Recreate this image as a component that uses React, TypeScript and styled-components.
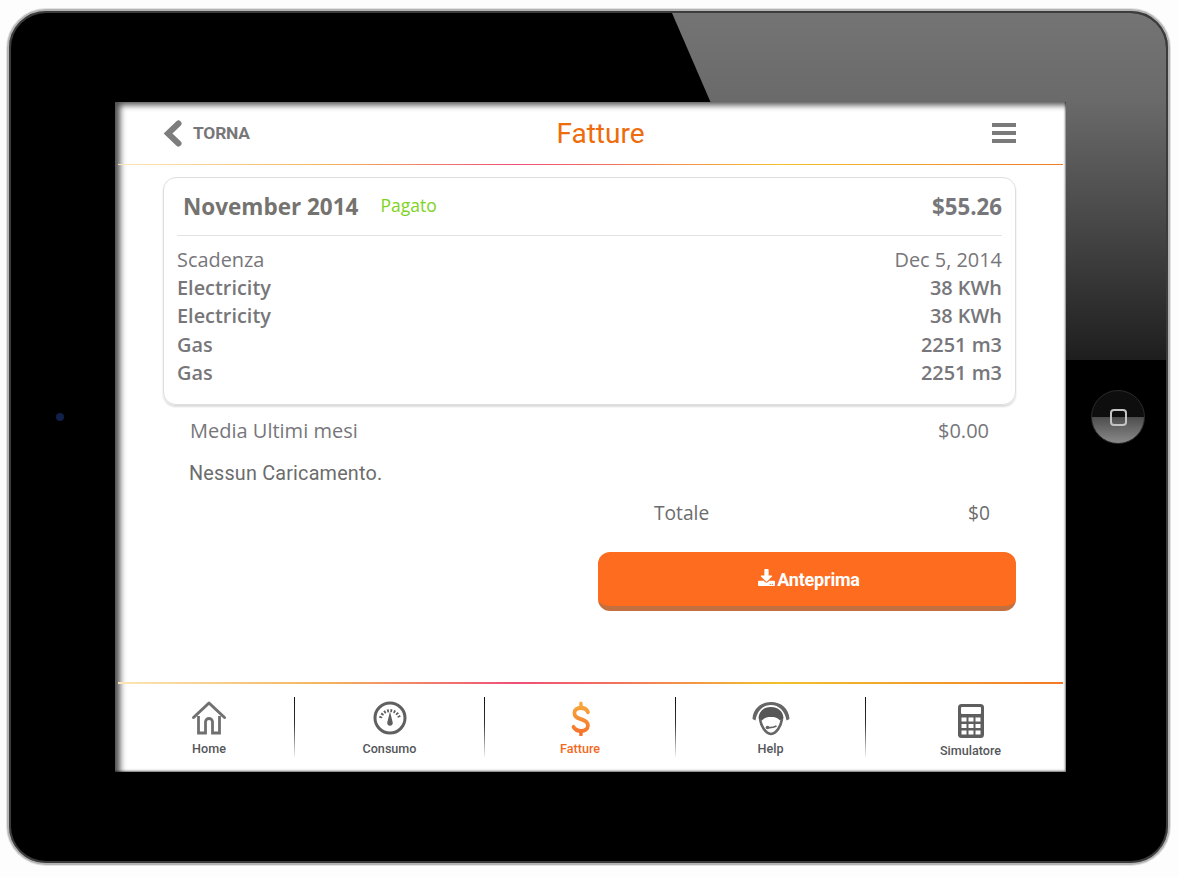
import styled, { createGlobalStyle } from "styled-components";
import { FaDownload } from "react-icons/fa";

const GlobalStyle = createGlobalStyle`
  html, body {
    margin: 0;
    padding: 0;
    background: #fdfdfd;
  }
  * {
    box-sizing: border-box;
  }
`;

const Page = styled.div`
  width: 1179px;
  height: 877px;
  padding: 9px 9px 12px 7px;
  overflow: hidden;
`;

const Tablet = styled.div`
  position: relative;
  width: 1163px;
  height: 856px;
  padding: 91px 101px 90px 106px;
  background: #000;
  border: 2px solid #b4b4b4;
  border-radius: 39px;
  box-shadow: inset 0 0 0 2px #3c3c3c, 0 0 0 1px #e2e2e2;
  overflow: hidden;
`;

const Glare = styled.div`
  position: absolute;
  top: 2px;
  right: 2px;
  width: 494px;
  height: 347px;
  border-radius: 0 35px 0 0;
  background: linear-gradient(#747474, #6a6a6a 25%, #484848 60%, #1e1e1e);
  clip-path: polygon(0 0, 100% 0, 100% 100%, 150px 100%);
`;

const Camera = styled.div`
  position: absolute;
  left: 47px;
  top: 402px;
  width: 8px;
  height: 8px;
  border-radius: 50%;
  background: #10204a;
`;

const HomeButton = styled.div`
  position: absolute;
  left: 1082px;
  top: 379px;
  width: 54px;
  height: 54px;
  border-radius: 50%;
  border: 1px solid #2b2b2b;
  background: linear-gradient(#0e0e0e 50%, #4e4e4e 51%, #8a8a8a);
  display: flex;
  align-items: center;
  justify-content: center;
`;

const HomeSquare = styled.div`
  width: 17px;
  height: 17px;
  border: 2px solid #c4c4c4;
  border-radius: 4px;
`;

const Screen = styled.div`
  position: relative;
  width: 951px;
  height: 670px;
  background: #fff;
  box-shadow: inset 5px 3px 6px rgba(0, 0, 0, 0.7), inset -1px -1px 2px rgba(0, 0, 0, 0.5);
  display: flex;
  flex-direction: column;
  font-family: "Open Sans", sans-serif;
`;

const Header = styled.header`
  height: 62px;
  padding: 0 50px 0 48px;
  display: grid;
  grid-template-columns: 1fr auto 1fr;
  align-items: center;
`;

const BackLink = styled.a`
  display: flex;
  align-items: center;
  gap: 11px;
  color: #77777a;
  font: 700 17.4px "Roboto", sans-serif;
  letter-spacing: -0.2px;
`;

const Title = styled.h1`
  margin: 0 0 0 22px;
  color: #ee6c0c;
  font: 400 28px "Roboto", sans-serif;
`;

const MenuButton = styled.div`
  justify-self: end;
  width: 24px;
  display: flex;
  flex-direction: column;
  gap: 4px;
`;

const MenuBar = styled.span`
  height: 4px;
  background: #7a7a7a;
`;

const RainbowLine = styled.div<{ $thick?: boolean }>`
  flex: none;
  height: ${(p) => (p.$thick ? 2 : 1)}px;
  margin: 0 3px 0 3px;
  background: linear-gradient(
    90deg,
    #fbe6b8 0%,
    #f4b45c 22%,
    #ee4f78 42%,
    #f2705e 52%,
    #f3c12c 70%,
    #f0a52c 82%,
    #f47a26 100%
  );
`;

const Content = styled.main`
  flex: 1;
  padding: 12px 50px 0 48px;
`;

const Card = styled.section`
  height: 228px;
  padding: 0 13px;
  border: 1px solid #dedede;
  border-radius: 13px;
  box-shadow: 0 2px 2px rgba(0, 0, 0, 0.14);
  color: #77767a;
`;

const CardHead = styled.div`
  height: 58px;
  padding: 0 0 0 6px;
  display: flex;
  align-items: center;
  border-bottom: 1px solid #e2e2e2;
`;

const Month = styled.h2`
  margin: 0;
  font-size: 22.5px;
  font-weight: 700;
  color: #75736f;
`;

const Status = styled.span`
  margin-left: 22px;
  margin-top: -3px;
  font-size: 17.5px;
  color: #7ed321;
`;

const Amount = styled.span`
  margin-left: auto;
  font-size: 22.3px;
  font-weight: 700;
`;

const Rows = styled.div`
  padding-top: 9px;
`;

const Row = styled.div<{ $bold?: boolean }>`
  height: 28.4px;
  display: flex;
  justify-content: space-between;
  align-items: center;
  font-size: 19.9px;
  font-weight: ${(p) => (p.$bold ? 600 : 400)};
`;

const Average = styled.div`
  margin-top: 10px;
  padding: 0 27px;
  height: 30px;
  display: flex;
  justify-content: space-between;
  align-items: center;
  font-size: 20px;
  color: #77767a;
`;

const Empty = styled.p`
  margin: 17px 0 0 26px;
  height: 24px;
  font: 400 19.8px/24px "Roboto", "Open Sans", sans-serif;
  letter-spacing: 0.2px;
  color: #6c6c6c;
`;

const Total = styled.div`
  margin: 14px 26px 0 491px;
  height: 24px;
  display: flex;
  justify-content: space-between;
  align-items: center;
  font-size: 19.2px;
  font-weight: 500;
  color: #6c6c6c;
`;

const ButtonRow = styled.div`
  margin-top: 28px;
  display: flex;
  justify-content: flex-end;
`;

const PreviewButton = styled.button`
  width: 418px;
  height: 59px;
  padding: 0 0 0 4px;
  border: none;
  border-bottom: 5px solid #c2703f;
  border-radius: 12px;
  background: #fd6c1f;
  color: #fff;
  font: 700 18px "Roboto", sans-serif;
  letter-spacing: -0.2px;
  display: flex;
  align-items: center;
  justify-content: center;
  gap: 2px;
  svg {
    width: 17px;
    height: 17px;
    margin-top: -4px;
  }
`;

const Footer = styled.nav`
  flex: none;
  height: 88px;
  padding: 13px 0 0 9px;
  display: flex;
  align-items: flex-start;
`;

const Tab = styled.a<{ $width: number; $active?: boolean; $shift?: number; $low?: boolean }>`
  width: ${(p) => p.$width}px;
  padding-left: ${(p) => p.$shift ?? 0}px;
  padding-top: ${(p) => (p.$low ? 6 : 3)}px;
  display: flex;
  flex-direction: column;
  align-items: center;
  height: 64px;
  color: ${(p) => (p.$active ? "#f4691e" : "#55565a")};
  font: 500 12.6px "Roboto", sans-serif;
  svg {
    flex: none;
    height: 36px;
  }
`;

const TabLabel = styled.span<{ $low?: boolean }>`
  margin-top: ${(p) => (p.$low ? 4 : 5)}px;
`;

const Separator = styled.div`
  flex: none;
  width: 1px;
  height: 60px;
  background: linear-gradient(#111 0%, #333 45%, rgba(0, 0, 0, 0.05) 100%);
`;

const BackIcon = () => (
  <svg width="19" height="27" viewBox="0 0 19 27" fill="none">
    <path
      d="M15.500 3.500 5 13.500l10.500 10"
      stroke="#7d7d7d"
      strokeWidth="6"
      strokeLinecap="round"
    />
  </svg>
);

const HomeIcon = () => (
  <svg width="36" viewBox="0 0 36 36" fill="none" stroke="#707070">
    <path d="M2.500 17.500 18 3l15.500 14.500" strokeWidth="3" strokeLinejoin="round" strokeLinecap="round" />
    <path d="M7.500 16v17h7V22a3.500 3.500 0 0 1 7 0v11h7V16" strokeWidth="2.800" />
  </svg>
);

const GaugeIcon = () => (
  <svg width="36" viewBox="0 0 36 36" fill="none">
    <circle cx="18" cy="18" r="15" stroke="#606060" strokeWidth="3" />
    <path
      d="M8.500 18A9.800 9.800 0 0 1 27.500 18"
      stroke="#5e5e5e"
      strokeWidth="3"
      strokeDasharray="1.800 1.500"
    />
    <path d="M18 11.500 20.600 22a2.800 2.800 0 1 1-5.200 0z" fill="#5e5e5e" />
  </svg>
);

const DollarIcon = () => (
  <svg width="21" viewBox="0 0 24 36" fill="none" preserveAspectRatio="none">
    <defs>
      <linearGradient id="dollarFill" gradientUnits="userSpaceOnUse" x1="0" y1="3" x2="0" y2="35">
        <stop offset="0" stopColor="#f7ab3c" />
        <stop offset="1" stopColor="#f66f2a" />
      </linearGradient>
    </defs>
    <path
      d="M20.500 12C19 9 16 7.800 12.500 7.800 8 7.800 5 10 5 13c0 3.500 3 5 7 6 5 1.200 8.500 2.700 8.500 6.500 0 3.500-3.500 5.500-8 5.500-3.500 0-6.500-1.300-8.500-4"
      stroke="url(#dollarFill)"
      strokeWidth="4.200"
      strokeLinecap="round"
    />
    <path d="M12.500 3.500v4M12.500 31v3.500" stroke="url(#dollarFill)" strokeWidth="4" strokeLinecap="round" />
  </svg>
);

const HelpIcon = () => (
  <svg width="38" viewBox="0 0 38 36" fill="none">
    <path
      d="M.5 19C1 8.500 9 2 19 2s18 6.500 18.500 17l-3 1.500C33 11 27 5 19 5S5 11 3.500 20.500z"
      fill="#666"
    />
    <path
      d="M6.500 18C7 11 12 7 19 7s12 4 12.500 11c-1 2.500-3 3-4.500 1.500-2-2-4.500-2.500-8-2.500s-6 .5-8 2.500C9.500 21 7.500 20.500 6.500 18z"
      fill="#565656"
    />
    <path
      d="M8 19c1 7 5.500 14.500 11 15 5.500-.5 10-8 11-15"
      stroke="#666"
      strokeWidth="2.600"
    />
    <path d="M15.500 27.500c3 .5 6 0 9-1.500" stroke="#666" strokeWidth="1.800" />
    <circle cx="15.500" cy="27.500" r="1.800" fill="#666" />
  </svg>
);

const CalculatorIcon = () => (
  <svg width="26" viewBox="0 0 26 36">
    <rect x="0" y="1" width="26" height="34" rx="3.500" fill="#5e5e5e" />
    <rect x="3" y="4" width="20" height="7" rx="1" fill="#fff" />
    {[14.5, 21, 27.5].map((y) =>
      [3.5, 10.5, 17.5].map((x) => (
        <rect key={`${x}-${y}`} x={x} y={y} width="5" height="4" fill="#fff" />
      ))
    )}
  </svg>
);

const App = () => {
  return (
    <Page>
      <GlobalStyle />
      <Tablet>
        <Glare />
        <Camera />
        <HomeButton>
          <HomeSquare />
        </HomeButton>

        <Screen>
          <Header>
            <BackLink>
              <BackIcon />
              TORNA
            </BackLink>
            <Title>Fatture</Title>
            <MenuButton>
              <MenuBar />
              <MenuBar />
              <MenuBar />
            </MenuButton>
          </Header>
          <RainbowLine />

          <Content>
            <Card>
              <CardHead>
                <Month>November 2014</Month>
                <Status>Pagato</Status>
                <Amount>$55.26</Amount>
              </CardHead>
              <Rows>
                <Row>
                  <span>Scadenza</span>
                  <span>Dec 5, 2014</span>
                </Row>
                <Row $bold>
                  <span>Electricity</span>
                  <span>38 KWh</span>
                </Row>
                <Row $bold>
                  <span>Electricity</span>
                  <span>38 KWh</span>
                </Row>
                <Row $bold>
                  <span>Gas</span>
                  <span>2251 m3</span>
                </Row>
                <Row $bold>
                  <span>Gas</span>
                  <span>2251 m3</span>
                </Row>
              </Rows>
            </Card>

            <Average>
              <span>Media Ultimi mesi</span>
              <span>$0.00</span>
            </Average>
            <Empty>Nessun Caricamento.</Empty>
            <Total>
              <span>Totale</span>
              <span>$0</span>
            </Total>
            <ButtonRow>
              <PreviewButton>
                <FaDownload />
                Anteprima
              </PreviewButton>
            </ButtonRow>
          </Content>

          <RainbowLine $thick />
          <Footer>
            <Tab $width={170}>
              <HomeIcon />
              <TabLabel>Home</TabLabel>
            </Tab>
            <Separator />
            <Tab $width={189}>
              <GaugeIcon />
              <TabLabel>Consumo</TabLabel>
            </Tab>
            <Separator />
            <Tab $width={190} $active>
              <DollarIcon />
              <TabLabel>Fatture</TabLabel>
            </Tab>
            <Separator />
            <Tab $width={189}>
              <HelpIcon />
              <TabLabel>Help</TabLabel>
            </Tab>
            <Separator />
            <Tab $width={199} $shift={10} $low>
              <CalculatorIcon />
              <TabLabel $low>Simulatore</TabLabel>
            </Tab>
          </Footer>
        </Screen>
      </Tablet>
    </Page>
  );
};

export default App;
